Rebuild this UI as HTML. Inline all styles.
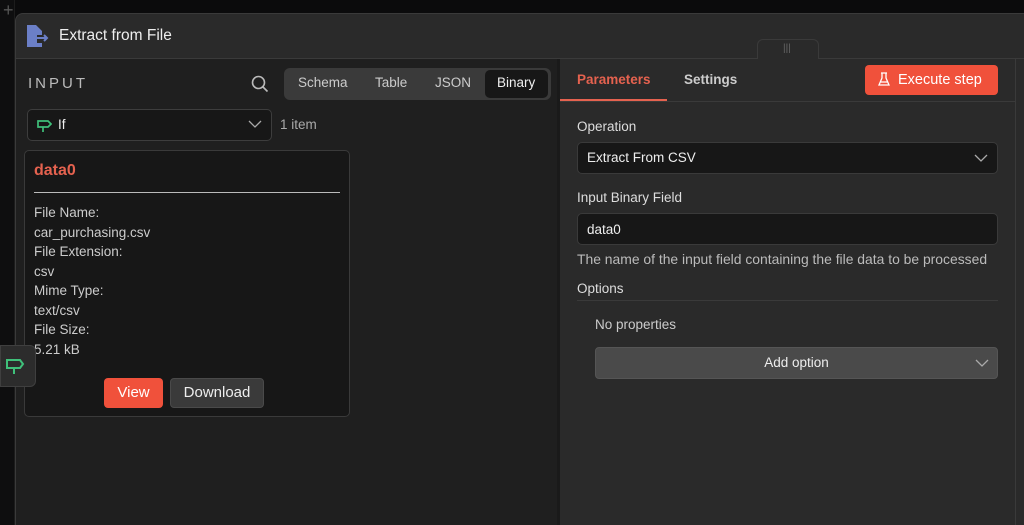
<!DOCTYPE html>
<html style="overflow:hidden;width:1024px;height:525px"><head><style>
*{box-sizing:border-box;margin:0;padding:0}
body{width:1024px;height:525px;overflow:hidden;background:#0b0b0c;font-family:"Liberation Sans",sans-serif;color:#e6e6e6;position:relative}
.a{position:absolute}
.t{white-space:nowrap}
</style></head><body>
<div class="a" style="left:0;top:0;width:15px;height:525px;background:#0e0e0f;border-right:1px solid #1c1c1c"></div>
<div class="a t" style="left:3px;top:0;color:#555;font-size:18px">+</div>
<div class="a" style="left:15px;top:13px;width:1009px;height:512px;background:#2a2a2a;border-radius:8px 0 0 0;border:1px solid #3a3a3a;border-right:none;border-bottom:none"></div>
<div class="a" style="left:15px;top:58px;width:1009px;height:1px;background:#3a3a3a"></div>
<svg class="a" style="left:26px;top:25px" width="24" height="22" viewBox="0 0 24 22"><path d="M1 0h9l6 6v4H11v8h5v4H1z" fill="#6b7fc7"/><path d="M11 13h10M18 10l3 3-3 3" stroke="#6b7fc7" stroke-width="2" fill="none"/></svg>
<div class="a t" style="left:59px;top:27px;font-size:15.5px;color:#eee">Extract from File</div>
<div class="a" style="left:16px;top:59px;width:541px;height:466px;background:#1f1f1f"></div>
<div class="a t" style="left:28px;top:75px;font-size:15px;letter-spacing:3px;color:#bbb">INPUT</div>
<svg class="a" style="left:251px;top:75px" width="18" height="18" viewBox="0 0 18 18"><circle cx="7.5" cy="7.5" r="6" stroke="#bbb" stroke-width="1.6" fill="none"/><path d="M12 12l4.5 4.5" stroke="#bbb" stroke-width="1.6"/></svg>
<div class="a" style="left:284px;top:68px;width:267px;height:32px;background:#3a3a3a;border-radius:6px"></div>
<div class="a t" style="left:298px;top:75px;font-size:13.5px;color:#ccc">Schema</div>
<div class="a t" style="left:375px;top:75px;font-size:13.5px;color:#ccc">Table</div>
<div class="a t" style="left:435px;top:75px;font-size:13.5px;color:#ccc">JSON</div>
<div class="a" style="left:485px;top:70px;width:63px;height:28px;background:#171717;border-radius:5px"></div>
<div class="a t" style="left:497px;top:75px;font-size:13.5px;color:#eee">Binary</div>
<div class="a" style="left:27px;top:109px;width:245px;height:32px;background:#171717;border:1px solid #3d3d3d;border-radius:5px"></div>
<svg class="a" style="left:36px;top:117px" width="16" height="16" viewBox="0 0 16 16"><path d="M2 4h10l3 3-3 3H2zM7 10v5" stroke="#3fc07a" stroke-width="1.7" fill="none"/></svg>
<div class="a t" style="left:58px;top:117px;font-size:13.5px;color:#eee">If</div>
<svg class="a" style="left:248px;top:119px" width="14" height="10"><path d="M1 2l6 6 6-6" stroke="#aaa" stroke-width="1.3" fill="none"/></svg>
<div class="a t" style="left:280px;top:117px;font-size:13.5px;color:#aaa">1 item</div>
<div class="a" style="left:24px;top:150px;width:326px;height:267px;background:#171717;border:1px solid #3a3a3a;border-radius:5px"></div>
<div class="a t" style="left:34px;top:162px;font-size:16px;font-weight:bold;color:#e5624f">data0</div>
<div class="a" style="left:34px;top:192px;width:306px;height:1px;background:#bbb"></div>
<div class="a" style="left:34px;top:203px;font-size:13.5px;line-height:19.5px;color:#ccc">File Name:<br>car_purchasing.csv<br>File Extension:<br>csv<br>Mime Type:<br>text/csv<br>File Size:<br>5.21 kB</div>
<div class="a t" style="left:104px;top:378px;width:59px;height:30px;background:#f0513b;border-radius:4px;font-size:15px;color:#fff;text-align:center;line-height:30px">View</div>
<div class="a t" style="left:170px;top:378px;width:94px;height:30px;background:#3a3a3a;border:1px solid #4a4a4a;border-radius:4px;font-size:15px;color:#eee;text-align:center;line-height:28px">Download</div>
<div class="a" style="left:0;top:345px;width:36px;height:42px;background:#2c2c2c;border:1px solid #3f3f3f;border-radius:0 6px 6px 0"></div>
<svg class="a" style="left:5px;top:357px" width="20" height="18" viewBox="0 0 20 18"><path d="M2 3h13l3 4-3 4H2zM9 11v6" stroke="#3fc07a" stroke-width="2" fill="none"/></svg>
<div class="a" style="left:757px;top:39px;width:62px;height:20px;background:#2a2a2a;border:1px solid #3a3a3a;border-bottom:none;border-radius:6px 6px 0 0"></div>
<div class="a t" style="left:783px;top:43px;font-size:10px;color:#666">|||</div>
<div class="a" style="left:557px;top:59px;width:3px;height:466px;background:#1a1a1a"></div>
<div class="a" style="left:1015px;top:59px;width:1px;height:466px;background:#3a3a3a"></div>
<div class="a t" style="left:577px;top:72px;font-size:13.5px;font-weight:bold;color:#e5624f">Parameters</div>
<div class="a" style="left:560px;top:99px;width:107px;height:2px;background:#e5624f"></div>
<div class="a t" style="left:684px;top:72px;font-size:13.5px;font-weight:bold;color:#ccc">Settings</div>
<div class="a" style="left:560px;top:101px;width:455px;height:1px;background:#3a3a3a"></div>
<div class="a t" style="left:865px;top:65px;width:133px;height:30px;background:#f0513b;border-radius:4px;font-size:14.5px;color:#fff;line-height:30px;padding-left:33px">Execute step</div>
<svg class="a" style="left:878px;top:72px" width="12" height="15" viewBox="0 0 12 15"><path d="M4 1v5L1 13h10L8 6V1M3 1h6M2.5 10h7" stroke="#fff" stroke-width="1.3" fill="none"/></svg>
<div class="a t" style="left:577px;top:119px;font-size:13.5px;color:#ddd">Operation</div>
<div class="a" style="left:577px;top:142px;width:421px;height:32px;background:#171717;border:1px solid #3a3a3a;border-radius:5px"></div>
<div class="a t" style="left:587px;top:150px;font-size:13.5px;color:#eee">Extract From CSV</div>
<svg class="a" style="left:974px;top:153px" width="14" height="10"><path d="M1 2l6 6 6-6" stroke="#aaa" stroke-width="1.3" fill="none"/></svg>
<div class="a t" style="left:577px;top:190px;font-size:13.5px;color:#ddd">Input Binary Field</div>
<div class="a" style="left:577px;top:213px;width:421px;height:32px;background:#171717;border:1px solid #3a3a3a;border-radius:5px"></div>
<div class="a t" style="left:587px;top:222px;font-size:13.5px;color:#eee">data0</div>
<div class="a t" style="left:577px;top:251px;font-size:13.9px;color:#bbb">The name of the input field containing the file data to be processed</div>
<div class="a t" style="left:577px;top:281px;font-size:13.5px;color:#ddd">Options</div>
<div class="a" style="left:577px;top:300px;width:421px;height:1px;background:#3a3a3a"></div>
<div class="a t" style="left:595px;top:317px;font-size:13.5px;color:#ccc">No properties</div>
<div class="a" style="left:595px;top:347px;width:403px;height:32px;background:#4a4a4a;border:1px solid #555;border-radius:4px"></div>
<div class="a t" style="left:595px;top:355px;width:403px;text-align:center;font-size:13.5px;color:#eee">Add option</div>
<svg class="a" style="left:975px;top:358px" width="14" height="10"><path d="M1 2l6 6 6-6" stroke="#aaa" stroke-width="1.3" fill="none"/></svg>
</body></html>
